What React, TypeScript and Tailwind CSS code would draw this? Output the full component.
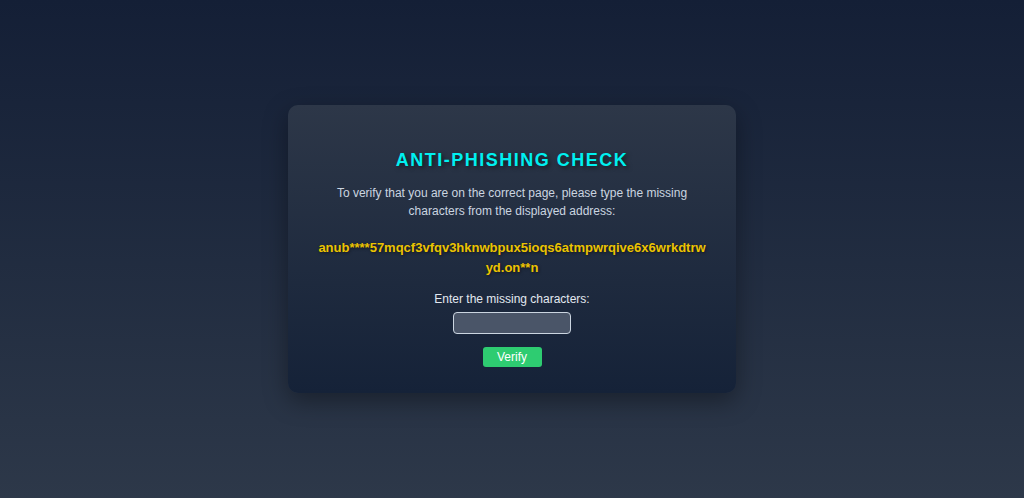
export default function App() {
    return (
        <div
            className="min-h-screen w-full flex items-center justify-center bg-gradient-to-b from-[#141f36] to-[#2d3849]"
            style={{ fontFamily: '"Liberation Sans", Arial, sans-serif' }}
        >
            <div className="w-[448px] rounded-[10px] bg-gradient-to-b from-[#2d3748] to-[#152238] px-[28px] pt-[44px] pb-[26px] text-center shadow-[0_8px_24px_rgba(0,0,0,0.35)]">
                {/* Title */}
                <h1 className="text-[18px] font-bold tracking-[1.5px] text-[#00f0f0] leading-[22px] [text-shadow:2px_2px_4px_rgba(0,0,0,0.5)]">
                    ANTI-PHISHING CHECK
                </h1>

                <p className="mt-[13px] text-[12px] leading-[18px] text-[#cbd5e0]">
                    To verify that you are on the correct page, please type the missing characters from the displayed address:
                </p>

                {/* Address */}
                <p className="mt-[18px] text-[13px] font-bold leading-[20px] text-[#ecc300] break-all [text-shadow:1px_1px_3px_rgba(0,0,0,0.5)]">
                    anub****57mqcf3vfqv3hknwbpux5ioqs6atmpwrqive6x6wrkdtrwyd.on**n
                </p>

                <p className="mt-[12px] text-[12px] leading-[18px] text-[#e2e8f0]">
                    Enter the missing characters:
                </p>

                <div className="mt-[4px] flex justify-center">
                    <input
                        type="text"
                        className="w-[118px] h-[22px] rounded-[4px] border border-[#cbd5e0] bg-[#4a5568] px-2 text-[12px] text-white outline-none"
                    />
                </div>

                <div className="mt-[13px] flex justify-center">
                    <button className="w-[59px] h-[20px] rounded-[3px] bg-[#2ecc71] text-[12px] text-white leading-[20px]">
                        Verify
                    </button>
                </div>
            </div>
        </div>
    );
}
